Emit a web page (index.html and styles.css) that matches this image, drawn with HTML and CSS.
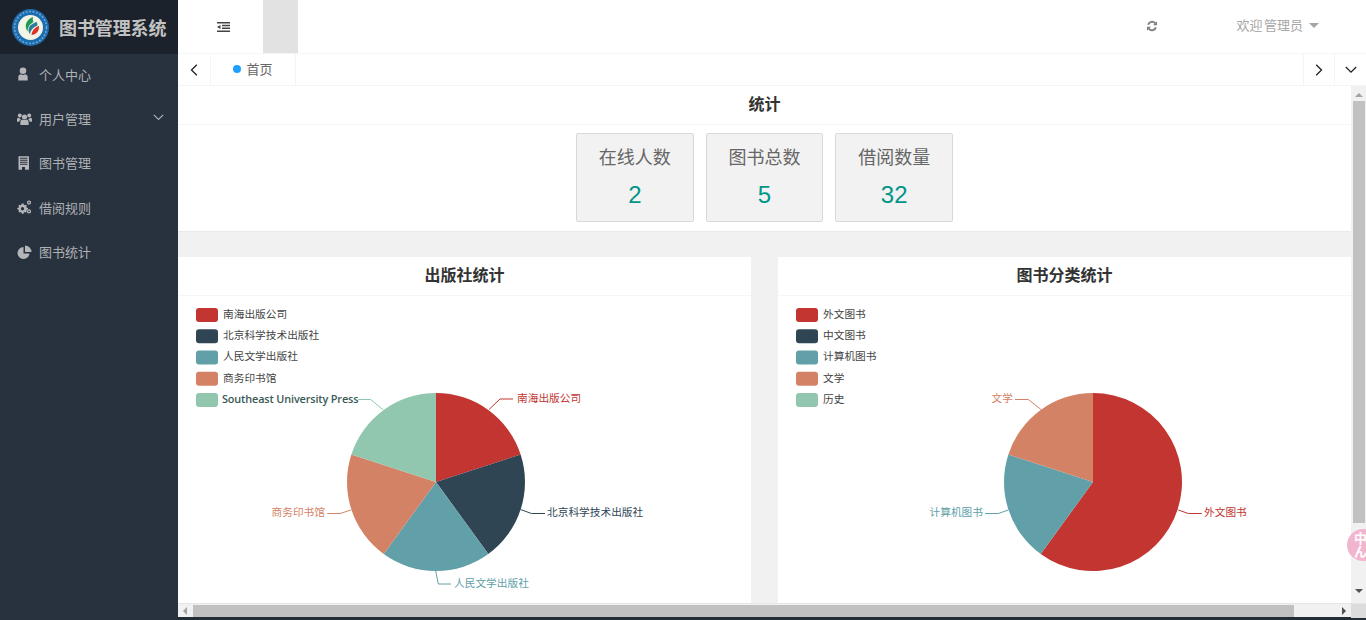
FILE: index.html
```html
<!DOCTYPE html>
<html lang="zh-CN">
<head>
<meta charset="utf-8">
<title>图书管理系统</title>
<link rel="stylesheet" href="styles.css">
</head>
<body>
<div class="app">
  <aside class="sidebar">
    <div class="brand">
      <svg class="logo" viewBox="0 0 37 37" width="37" height="37">
        <circle cx="18.500" cy="18.500" r="18.500" fill="#1c6cb0"/>
        <circle cx="18.500" cy="18.500" r="16" fill="none" stroke="#6fa6d2" stroke-width="1.600" stroke-dasharray="2 1.500"/>
        <circle cx="18.500" cy="18.500" r="12.500" fill="#f2f4e6"/>
        <path d="M21 8c-5 2-8 6-7 11 .3 1.500 1 2.500 1.800 3.500-.5-4 1.500-7 5.700-9.500-.8-1.500-.8-3.500-.5-5z" fill="#1f9a55"/>
        <path d="M25 13c-5 1.500-8.500 4-8.500 8 0 1.500.5 3 1.500 4 .5-4 3-6.500 7.500-8.500z" fill="#2b7f9c"/>
        <path d="M27 17c-4 1.500-7 4-7.500 9 4-.2 8-3.500 7.500-9z" fill="#d9342b"/>
      </svg>
      <span class="brand-name">图书管理系统</span>
    </div>
    <nav class="menu">
      <a class="menu-item">
        <svg class="menu-icon" viewBox="0 0 15 14"><circle cx="6" cy="3.800" r="3.300"/><path d="M1.300 13.500V9.800C1.300 8.300 2.800 7.200 4 7.200c.6.500 1.200.8 2 .8s1.400-.3 2-.8c1.200 0 2.700 1.100 2.700 2.600v3.700z"/></svg>
        <span>个人中心</span>
      </a>
      <a class="menu-item">
        <svg class="menu-icon" viewBox="0 0 16 14"><circle cx="8" cy="4.800" r="2.700"/><circle cx="3" cy="3.200" r="2.100"/><circle cx="13" cy="3.200" r="2.100"/><path d="M3.600 13.500V10.200c0-1.700 1.200-2.700 2.400-2.700.6.400 1.200.6 2 .6s1.400-.2 2-.6c1.200 0 2.400 1 2.400 2.700v3.300z"/><path d="M0 9.800V7.200C0 6.200.8 5.600 1.500 5.600c.5.400 1 .5 1.500.5.300.8.800 1.300 1.300 1.600-1 .3-1.800 1-2 2.100zM16 9.800V7.200c0-1-.8-1.600-1.500-1.600-.5.400-1 .5-1.500.5-.3.800-.8 1.300-1.300 1.600 1 .3 1.800 1 2 2.100z"/></svg>
        <span>用户管理</span>
        <svg class="menu-arrow" viewBox="0 0 11 7" width="11" height="7"><path d="M.8.800l4.700 4.700L10.200.800" fill="none" stroke="currentColor" stroke-width="1.100"/></svg>
      </a>
      <a class="menu-item">
        <svg class="menu-icon" viewBox="0 0 15 14"><path fill-rule="evenodd" d="M1.500.200h10.500v13.600H1.500zM3 1.800v.900h7.500v-.900zM3 3.800v.900h7.500v-.900zM3 5.800v.900h7.500v-.900zM3 7.800v.900h7.500v-.900zM5 11v2.800h3V11z"/></svg>
        <span>图书管理</span>
      </a>
      <a class="menu-item">
        <svg class="menu-icon" viewBox="0 0 15 14"><path fill-rule="evenodd" d="M5.500 3.500l1 .1.400 1.200 1 .5 1.100-.5.800.8-.5 1.100.5 1 1.200.4v1.200l-1.200.4-.5 1 .5 1.100-.8.800-1.100-.5-1 .5-.4 1.200H4.800l-.4-1.200-1-.5-1.100.5-.8-.8.5-1.100-.5-1L.3 9.300V8.100l1.200-.4.500-1-.5-1.100.8-.8 1.100.5 1-.5.400-1.200zM5.500 7a1.700 1.700 0 100 3.400 1.700 1.700 0 000-3.400z"/><path fill-rule="evenodd" d="M12 .500a2.100 2.100 0 110 4.200 2.100 2.100 0 010-4.200zm0 1.300a.8.800 0 100 1.600.8.800 0 000-1.600zM12 9.300a2.100 2.100 0 110 4.200 2.100 2.100 0 010-4.200zm0 1.300a.8.800 0 100 1.600.8.800 0 000-1.600z"/></svg>
        <span>借阅规则</span>
      </a>
      <a class="menu-item">
        <svg class="menu-icon" viewBox="0 0 14 14"><path d="M6 2a6 6 0 106 6.500H6z"/><path d="M7.500.500V7H14A6.500 6.500 0 007.500.500z"/></svg>
        <span>图书统计</span>
      </a>
    </nav>
  </aside>

  <div class="main">
    <header class="topbar">
      <div class="top-left">
        <svg class="indent-icon" viewBox="0 0 13 10" width="13" height="10"><path d="M0 0h13v1.600H0zM5 2.800h8v1.500H5zM5 5.600h8v1.500H5zM0 8.400h13V10H0zM3.500 2.900v4.200L0 5z"/></svg>
        <div class="top-active"></div>
      </div>
      <div class="top-right">
        <svg class="refresh-icon" viewBox="0 0 12 12" width="12" height="12"><path d="M1.200 4.800A4.900 4.900 0 019.800 2.500L11 1.300v4H7L8.500 3.800a3.100 3.100 0 00-5.300 1z"/><path d="M10.800 7.200A4.900 4.900 0 012.200 9.500L1 10.700v-4h4L3.500 8.200a3.100 3.100 0 005.300-1z"/></svg>
        <span class="welcome">欢迎 管理员</span>
        <span class="caret"></span>
      </div>
    </header>

    <div class="tabs">
      <button class="tab-btn tab-prev"><svg viewBox="0 0 8 12" width="8" height="12"><path d="M6.800.800L1.500 6l5.300 5.200" fill="none" stroke="#222" stroke-width="1.300"/></svg></button>
      <div class="tab"><i class="tab-dot"></i>首页</div>
      <div class="tab-space"></div>
      <button class="tab-btn tab-next"><svg viewBox="0 0 8 12" width="8" height="12"><path d="M1.200.800L6.500 6l-5.300 5.200" fill="none" stroke="#222" stroke-width="1.300"/></svg></button>
      <button class="tab-btn tab-down"><svg viewBox="0 0 12 8" width="12" height="8"><path d="M.8 1l5.200 5.200L11.200 1" fill="none" stroke="#222" stroke-width="1.300"/></svg></button>
    </div>

    <div class="viewport">
      <div class="content">
        <section class="panel stats-panel">
          <h2 class="panel-title">统计</h2>
          <div class="stats">
            <div class="stat"><div class="stat-label">在线人数</div><div class="stat-value">2</div></div>
            <div class="stat"><div class="stat-label">图书总数</div><div class="stat-value">5</div></div>
            <div class="stat"><div class="stat-label">借阅数量</div><div class="stat-value">32</div></div>
          </div>
        </section>
        <div class="charts">
          <section class="panel chart-panel">
            <h2 class="panel-title">出版社统计</h2>
            <svg class="chart" viewBox="0 0 573 307" width="573" height="307">
              <g class="legend">
                <rect x="18" y="12" width="22" height="14" rx="3" fill="#c23531"/><text x="45" y="22">南海出版公司</text>
                <rect x="18" y="33.250" width="22" height="14" rx="3" fill="#2f4554"/><text x="45" y="43">北京科学技术出版社</text>
                <rect x="18" y="54.500" width="22" height="14" rx="3" fill="#61a0a8"/><text x="45" y="64">人民文学出版社</text>
                <rect x="18" y="75.750" width="22" height="14" rx="3" fill="#d48265"/><text x="45" y="86">商务印书馆</text>
                <rect x="18" y="97" width="22" height="14" rx="3" fill="#91c7ae"/><text x="44" y="107" class="latin">Southeast University Press</text>
              </g>
              <path d="M258 186V97A89 89 0 01342.640 158.500Z" fill="#c23531"/>
              <path d="M258 186L342.640 158.500A89 89 0 01310.310 258Z" fill="#2f4554"/>
              <path d="M258 186L310.310 258A89 89 0 01205.690 258Z" fill="#61a0a8"/>
              <path d="M258 186L205.690 258A89 89 0 01173.360 158.500Z" fill="#d48265"/>
              <path d="M258 186L173.360 158.500A89 89 0 01258 97Z" fill="#91c7ae"/>
              <g class="leaders">
                <path d="M311 113.500L322 103H335" stroke="#c23531"/>
                <path d="M342.500 213.500L353.500 217.500H367" stroke="#2f4554"/>
                <path d="M257.700 275L260.300 288H273" stroke="#61a0a8"/>
                <path d="M173 214L162 217.500H149.300" stroke="#d48265"/>
                <path d="M205.300 114L192.700 103.500H180.300" stroke="#91c7ae"/>
              </g>
              <g class="labels">
                <text x="339" y="106" fill="#c23531">南海出版公司</text>
                <text x="369" y="220" fill="#2f4554">北京科学技术出版社</text>
                <text x="276" y="291" fill="#61a0a8">人民文学出版社</text>
                <text x="147" y="220" fill="#d48265" class="end">商务印书馆</text>
              </g>
            </svg>
          </section>
          <section class="panel chart-panel">
            <h2 class="panel-title">图书分类统计</h2>
            <svg class="chart" viewBox="0 0 573 307" width="573" height="307">
              <g class="legend">
                <rect x="18" y="12" width="22" height="14" rx="3" fill="#c23531"/><text x="45" y="22">外文图书</text>
                <rect x="18" y="33.250" width="22" height="14" rx="3" fill="#2f4554"/><text x="45" y="43">中文图书</text>
                <rect x="18" y="54.500" width="22" height="14" rx="3" fill="#61a0a8"/><text x="45" y="64">计算机图书</text>
                <rect x="18" y="75.750" width="22" height="14" rx="3" fill="#d48265"/><text x="45" y="86">文学</text>
                <rect x="18" y="97" width="22" height="14" rx="3" fill="#91c7ae"/><text x="45" y="107">历史</text>
              </g>
              <path d="M315 186V97A89 89 0 11262.690 258Z" fill="#c23531"/>
              <path d="M315 186L262.690 258A89 89 0 01230.360 158.500Z" fill="#61a0a8"/>
              <path d="M315 186L230.360 158.500A89 89 0 01315 97Z" fill="#d48265"/>
              <g class="leaders">
                <path d="M400.300 214L410.300 217.500H423.700" stroke="#c23531"/>
                <path d="M230.300 214L220.300 217.500H207" stroke="#61a0a8"/>
                <path d="M263 113.500L250.300 103.500H237" stroke="#d48265"/>
              </g>
              <g class="labels">
                <text x="426" y="220" fill="#c23531">外文图书</text>
                <text x="205" y="220" fill="#61a0a8" class="end">计算机图书</text>
                <text x="235" y="106" fill="#d48265" class="end">文学</text>
              </g>
            </svg>
          </section>
        </div>
      </div>
      <div class="vscroll">
        <span class="arrow arrow-up"></span>
        <div class="vthumb"></div>
        <span class="arrow arrow-down"></span>
      </div>
    </div>

    <div class="hscroll">
      <span class="arrow arrow-left"></span>
      <div class="htrack"><div class="hthumb"></div></div>
      <span class="arrow arrow-right"></span>
      <div class="corner"></div>
    </div>
  </div>
</div>
<div class="baseline"></div>
<div class="ime-badge">中<br>ん</div>
</body>
</html>
```
FILE: styles.css
```css
* { box-sizing: border-box; }
html, body { margin: 0; padding: 0; height: 620px; overflow: hidden; }
body {
  font-family: "Liberation Sans", "Noto Sans CJK SC", sans-serif;
  background: #fff;
  color: #333;
  position: relative;
}
.app { display: flex; height: 617px; }
.baseline { height: 3px; background: #222d35; }

.sidebar { width: 178px; flex: none; background: #28323e; height: 620px; position: relative; z-index: 1; }
.brand { height: 54px; background: #1b222c; display: flex; align-items: center; gap: 10px; padding-left: 12px; }
.logo { flex: none; }
.brand-name { font-size: 18px; font-weight: 700; color: #c2c2c2; white-space: nowrap; letter-spacing: -0.1px; }
.menu { display: flex; flex-direction: column; margin-top: -2px; }
.menu-item { height: 44.4px; display: flex; align-items: center; padding-left: 17px; font-size: 13px; color: #aeb1b4; position: relative; }
.menu-icon { width: 15px; height: 14px; fill: #b4b6b9; margin-right: 7px; flex: none; }
.menu-arrow { position: absolute; right: 14px; top: 18px; color: #aeb1b4; }

.main { flex: 1; min-width: 0; display: flex; flex-direction: column; }

.topbar { height: 54px; flex: none; display: flex; justify-content: space-between; border-bottom: 1px solid #f6f6f6; }
.top-left { display: flex; align-items: stretch; }
.indent-icon { margin: 22px 33px 0 39px; fill: #444; }
.top-active { width: 35px; background: #e2e2e2; }
.top-right { display: flex; align-items: center; font-size: 13px; color: #a6a6a6; padding: 0 47px 4px 0; }
.refresh-icon { fill: #808080; margin: 2px 78px 0 0; }
.welcome { white-space: nowrap; word-spacing: -2px; }
.caret { width: 0; height: 0; border: 5px solid transparent; border-top: 5px solid #a6a6a6; border-bottom: 0; margin: 2px 0 0 6px; }

.tabs { height: 32px; flex: none; display: flex; border-bottom: 1px solid #f4f4f4; background: #fff; }
.tab-btn { background: none; border: 0; border-right: 1px solid #f4f4f4; padding: 0; display: flex; align-items: center; justify-content: center; }
.tab-prev { width: 33px; }
.tab-next { width: 31px; border-left: 1px solid #f4f4f4; border-right: 0; }
.tab-down { width: 32px; border-left: 1px solid #f4f4f4; border-right: 0; }
.tab { width: 85px; display: flex; align-items: center; justify-content: center; gap: 5px; font-size: 13px; color: #666; border-right: 1px solid #f4f4f4; padding: 0 0 2px 0; }
.tab-dot { width: 8px; height: 8px; border-radius: 50%; background: #1e9fff; }
.tab-space { flex: 1; }

.viewport { flex: 1; min-height: 0; display: flex; }
.content { flex: 1; min-width: 0; background: #f1f1f1; overflow: hidden; }
.panel { background: #fff; }
.panel-title { margin: 0; height: 39px; line-height: 37px; text-align: center; font-size: 16px; font-weight: 700; color: #333; border-bottom: 1px solid #f6f6f6; }
.stats-panel { height: 146px; border-bottom: 1px solid #e9e9e9; }
.stats { display: flex; justify-content: center; gap: 12px; padding-top: 8px; }
.stat { width: 117.67px; height: 89px; background: #f2f2f2; border: 1px solid #d9d9d9; border-radius: 2px; text-align: center; }
.stat-label { font-size: 18px; line-height: 24px; margin-top: 12px; color: #666; }
.stat-value { font-size: 24px; line-height: 28px; margin-top: 11px; color: #009688; }

.charts { display: flex; justify-content: space-between; margin-top: 25px; }
.chart-panel { width: 573px; height: 346px; }
.chart { display: block; }
.chart text { font-family: "Noto Sans CJK SC", "Liberation Sans", sans-serif; font-size: 10.7px; }
.chart .latin { font-family: "Open Sans", "Noto Sans CJK SC", sans-serif; font-size: 10.9px; font-weight: 600; letter-spacing: -0.15px; }
.legend text { fill: #444; }
.legend .latin { fill: #3a5a55; }
.leaders path { fill: none; stroke-width: 1; }
.labels .end { text-anchor: end; }

.vscroll { width: 15px; flex: none; background: #f1f1f1; display: flex; flex-direction: column; align-items: center; }
.vthumb { width: 12px; height: 422px; background: #c1c1c1; margin-top: 4px; }
.arrow { width: 0; height: 0; flex: none; border: 4px solid transparent; }
.arrow-up { border-top: 0; border-bottom: 4px solid #a3a3a3; margin-top: 7px; }
.arrow-down { border-bottom: 0; border-top: 4px solid #505050; margin-top: 66px; }
.hscroll { height: 14px; flex: none; display: flex; align-items: center; background: #f1f1f1; border-top: 1px solid #e6e6e6; }
.arrow-left { border-left: 0; border-right: 4px solid #a3a3a3; margin-left: 5px; }
.htrack { flex: 1; height: 12px; padding-left: 6px; }
.hthumb { width: 1101px; height: 12px; background: #c1c1c1; }
.arrow-right { border-right: 0; border-left: 4px solid #505050; margin-right: 5px; }
.corner { width: 15px; height: 14px; background: #dcdcdc; }

.ime-badge { position: absolute; left: 1347px; top: 529px; width: 32px; height: 32px; border-radius: 50%; background: #f2b5d0; color: #fff; font-size: 13px; font-weight: 700; line-height: 13px; padding: 3px 0 0 7px; z-index: 2; }
```
